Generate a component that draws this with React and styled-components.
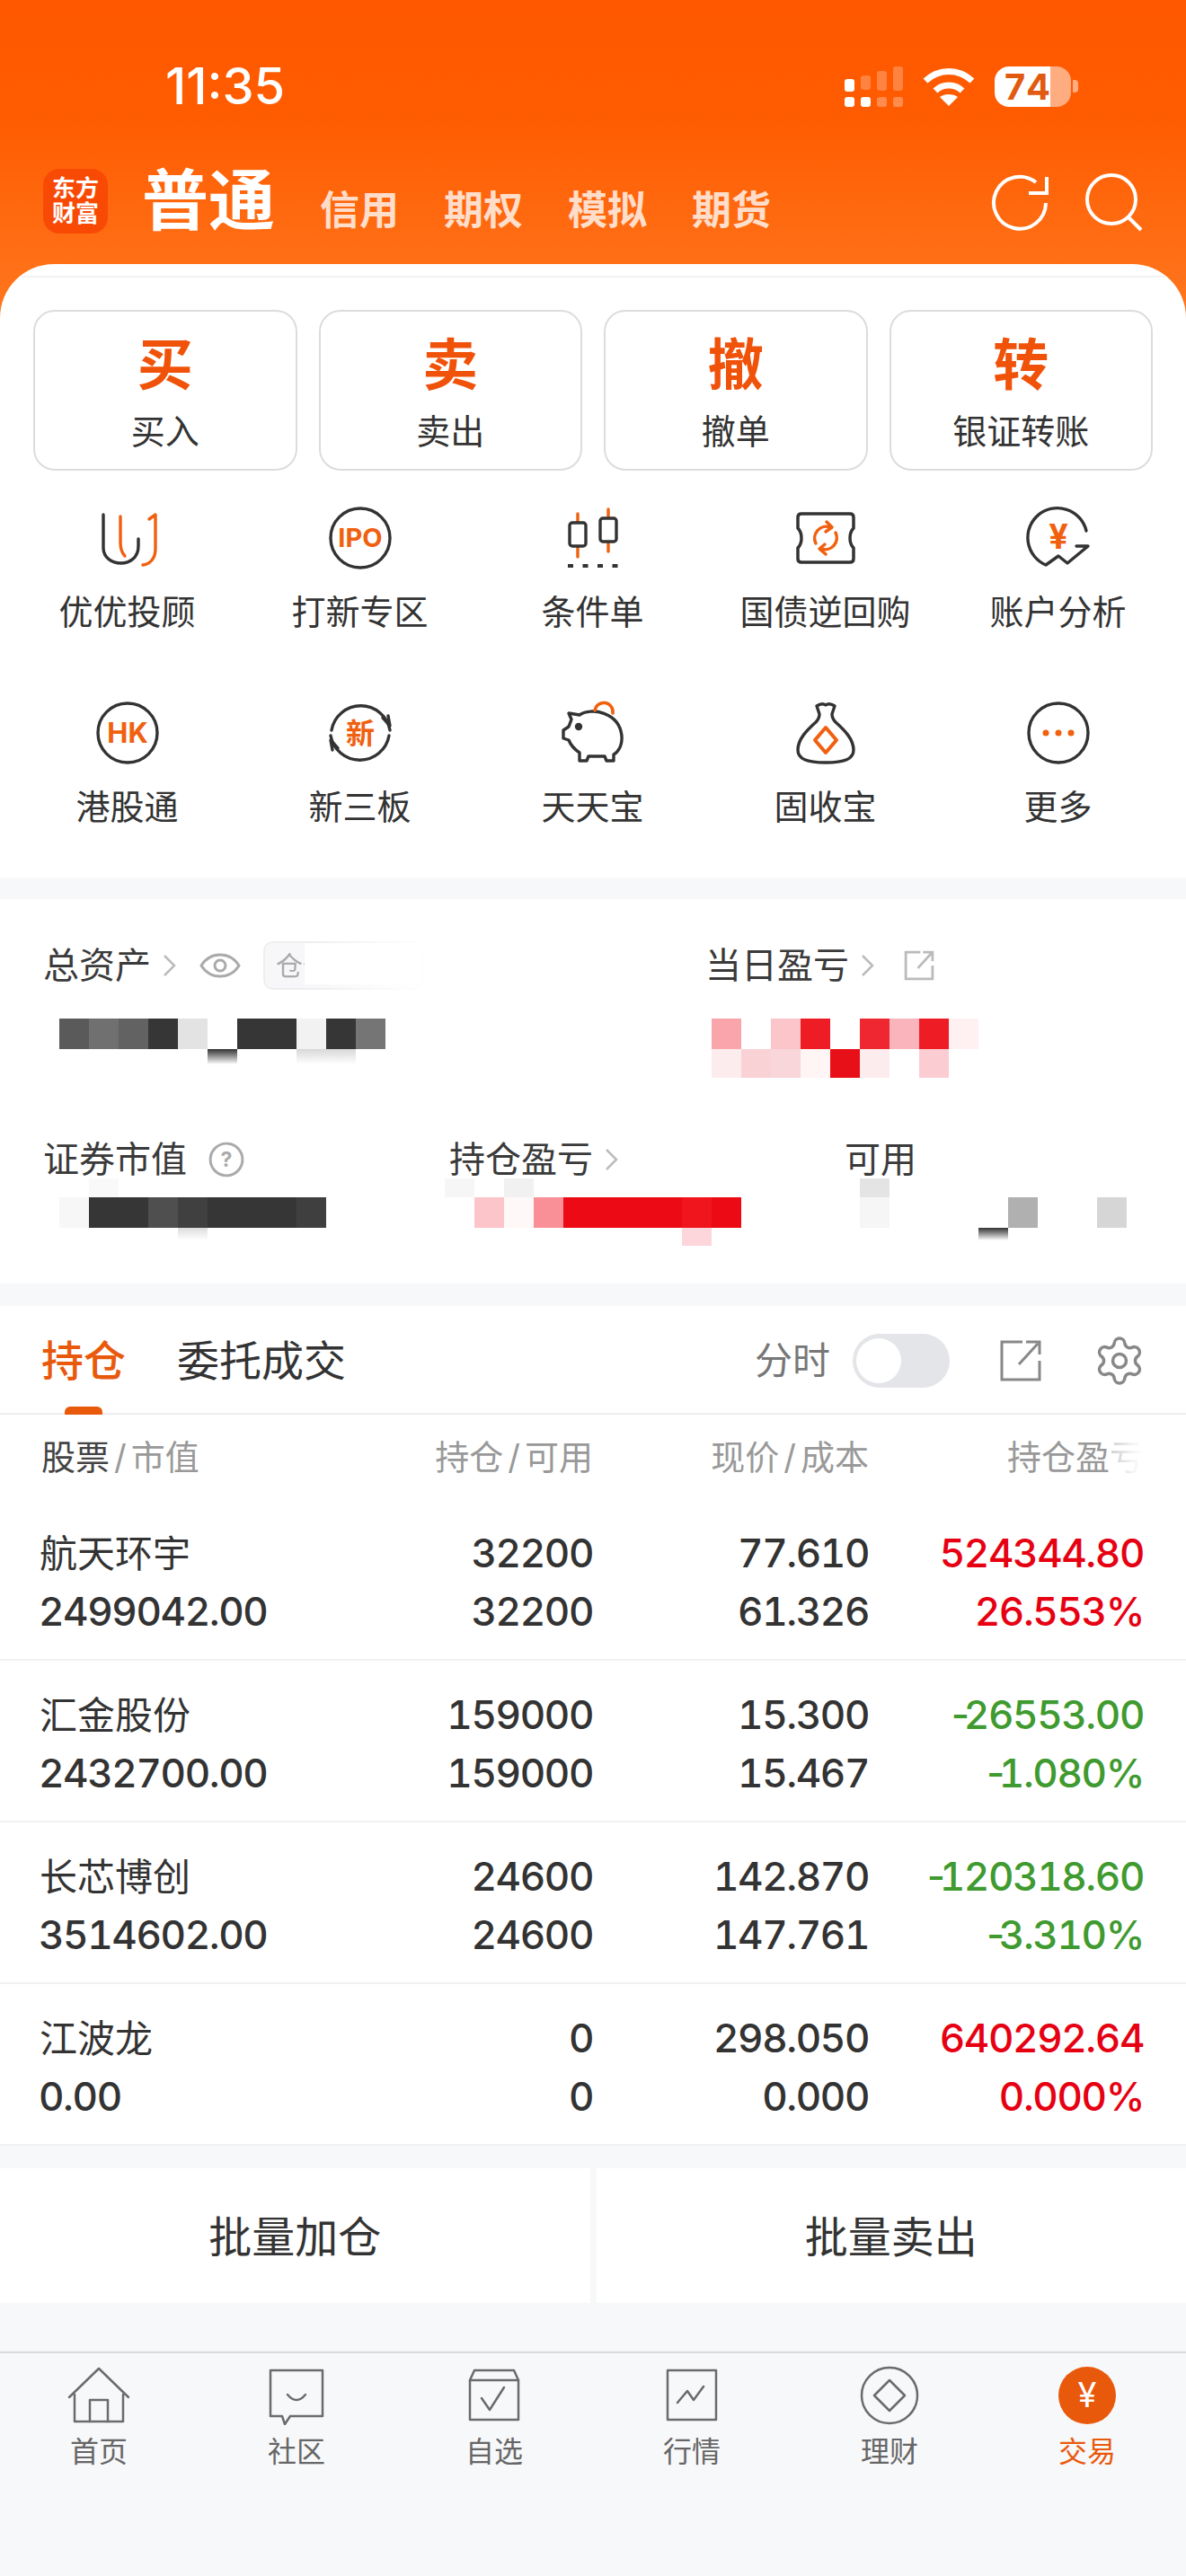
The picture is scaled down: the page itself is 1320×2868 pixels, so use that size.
import React from "react";
import styled, { createGlobalStyle } from "styled-components";
import { Settings } from "lucide-react";

const ORANGE = "#e9590c";
const INK = "#333";
const UP = "#e60012";
const DOWN = "#3f9a2f";

const GlobalStyle = createGlobalStyle`
  html, body { margin: 0; padding: 0; background: #f7f8fa; }
  * { box-sizing: border-box; }
  body { font-family: Inter, "Noto Sans CJK SC", sans-serif; color: ${INK}; }
`;

const Page = styled.div`
  width: 1320px;
  height: 2868px;
  display: flex;
  flex-direction: column;
  overflow: hidden;
  background: #f7f8fa;
`;

const TopArea = styled.div`
  background: linear-gradient(#ff5800 0, #ff5b00 120px, #ff771f 360px) no-repeat;
  background-size: 100% 370px;
`;

const StatusBar = styled.div`
  display: flex;
  align-items: center;
  justify-content: space-between;
  height: 45px;
  margin-top: 74px;
  padding: 0 128px 0 184px;
  color: #fff;
`;

const Clock = styled.div`
  font-size: 56px;
  font-weight: 500;
  line-height: 45px;
`;

const StatusIcons = styled.div`
  display: flex;
  align-items: center;
  gap: 22px;
`;

const Battery = styled.div`
  position: relative;
  width: 85px;
  height: 45px;
  border-radius: 16px;
  background: linear-gradient(90deg, #fff 73%, rgba(255, 255, 255, 0.5) 73%);
  color: #e25a10;
  font-size: 40px;
  font-weight: 700;
  line-height: 45px;
  padding-left: 11px;
  letter-spacing: 3px;

  &::after {
    content: "";
    position: absolute;
    right: -8px;
    top: 15px;
    width: 6px;
    height: 14px;
    border-radius: 0 4px 4px 0;
    background: rgba(255, 255, 255, 0.5);
  }
`;

const Nav = styled.div`
  display: flex;
  align-items: flex-end;
  height: 72px;
  margin-top: 69px;
  padding: 0 47px 0 48px;
`;

const Logo = styled.div`
  width: 72px;
  height: 72px;
  border-radius: 18px;
  background: #f94a05;
  color: #fff;
  font-size: 26px;
  font-weight: 700;
  line-height: 28px;
  text-align: center;
  padding-top: 8px;
`;

const MainTab = styled.div`
  margin-left: 38px;
  color: #fff;
  font-size: 74px;
  font-weight: 700;
  line-height: 74px;
`;

const NavTabs = styled.div`
  display: flex;
  gap: 50px;
  margin-left: 50px;
`;

const NavTab = styled.div`
  color: rgba(255, 255, 255, 0.8);
  font-size: 44px;
  font-weight: 700;
  line-height: 52px;
`;

const NavActions = styled.div`
  display: flex;
  gap: 36px;
  margin-left: auto;
  color: #fff;
`;

const Sheet = styled.div`
  margin-top: 34px;
  padding: 13px 0 57px;
  border-radius: 60px 60px 0 0;
  background: #fff;
`;

const SheetRule = styled.div`
  height: 2px;
  margin: 0 24px;
  background: #f2f2f2;
`;

const TradeRow = styled.div`
  display: grid;
  grid-template-columns: repeat(4, 1fr);
  gap: 24px;
  margin-top: 36px;
  padding: 0 37px;
`;

const TradeButton = styled.div`
  height: 179px;
  border: 2px solid #dcdcdc;
  border-radius: 24px;
  text-align: center;
  padding-top: 22px;
`;

const TradeGlyph = styled.div`
  color: #f0520a;
  font-size: 62px;
  font-weight: 700;
  line-height: 76px;
`;

const TradeLabel = styled.div`
  font-size: 38px;
  line-height: 46px;
  margin-top: 12px;
`;

const ServiceGrid = styled.div`
  display: grid;
  grid-template-columns: repeat(5, 259px);
  row-gap: 78px;
  margin-top: 40px;
  padding: 0 12px;
`;

const Service = styled.div`
  display: flex;
  flex-direction: column;
  align-items: center;
  gap: 25px;
`;

const ServiceLabel = styled.div`
  font-size: 38px;
  line-height: 44px;
`;

const Assets = styled.div`
  height: 428px;
  margin-top: 24px;
  padding-top: 52px;
  background: #fff;
`;

const MetricRow = styled.div`
  display: flex;
  height: 216px;
  padding-left: 48px;
`;

const Metric = styled.div`
  width: ${(p) => p.$w}px;
`;

const MetricHead = styled.div`
  display: flex;
  align-items: center;
  height: 44px;
  font-size: 40px;
  line-height: 44px;
  color: #3a3a3a;
`;

const Chip = styled.div`
  position: relative;
  width: 178px;
  height: 54px;
  margin-left: 25px;
  padding-left: 12px;
  overflow: hidden;
  border: 2px solid #eee;
  border-radius: 10px;
  background: #f7f7f9;
  color: #aaa;
  font-size: 30px;
  line-height: 50px;
  -webkit-mask-image: linear-gradient(90deg, #000 30%, rgba(0, 0, 0, 0.25) 80%, rgba(0, 0, 0, 0.1) 100%);
  mask-image: linear-gradient(90deg, #000 30%, rgba(0, 0, 0, 0.25) 80%, rgba(0, 0, 0, 0.1) 100%);

  &::after {
    content: "";
    position: absolute;
    top: -2px;
    right: -2px;
    bottom: 4px;
    width: 132px;
    background: #fff;
  }
`;

const MosaicBox = styled.div`
  margin: ${(p) => p.$top}px 0 0 ${(p) => p.$left}px;
`;

const MosaicRow = styled.div`
  display: flex;
  height: ${(p) => p.$h}px;
`;

const MosaicCell = styled.div`
  width: 33px;
  height: 100%;
  background: ${(p) =>
    p.$fade ? `linear-gradient(${p.$c}, rgba(255, 255, 255, 0))` : p.$c};
`;

const ChevronWrap = styled.svg`
  margin-left: 8px;
`;

const Holdings = styled.div`
  margin-top: 25px;
  background: #fff;
`;

const HoldingTabs = styled.div`
  position: relative;
  display: flex;
  align-items: center;
  height: 121px;
  padding: 2px 44px 0 46px;
  border-bottom: 2px solid #eee;
`;

const HoldingTab = styled.div`
  margin-right: 57px;
  color: ${(p) => (p.$active ? ORANGE : INK)};
  font-size: 47px;
  font-weight: ${(p) => (p.$active ? 500 : 400)};
  line-height: 56px;
`;

const TabMark = styled.div`
  position: absolute;
  left: 72px;
  bottom: -2px;
  width: 42px;
  height: 9px;
  border-radius: 6px 6px 0 0;
  background: ${ORANGE};
`;

const TabTools = styled.div`
  display: flex;
  align-items: center;
  margin-left: auto;
  color: #888;
`;

const ToolLabel = styled.div`
  font-size: 42px;
  line-height: 50px;
  color: #777;
`;

const Toggle = styled.div`
  position: relative;
  width: 108px;
  height: 60px;
  margin: 0 55px 0 25px;
  border-radius: 30px;
  background: #e4e5e8;

  &::after {
    content: "";
    position: absolute;
    left: 4px;
    top: 5px;
    width: 50px;
    height: 50px;
    border-radius: 50%;
    background: #fff;
  }
`;

const GearIcon = styled(Settings)`
  margin-left: 56px;
`;

const TableGrid = styled.div`
  display: grid;
  grid-template-columns: 303px 311px 307px 306px;
  padding-left: 46px;
`;

const TableHead = styled(TableGrid)`
  height: 94px;
  padding-top: 24px;
  font-size: 38px;
  line-height: 46px;
  color: #999;
`;

const HeadCell = styled.div`
  text-align: ${(p) => (p.$left ? "left" : "right")};
`;

const HeadStrong = styled.span`
  color: #444;
`;

const FadedEnd = styled.span`
  display: inline-block;
  -webkit-mask-image: linear-gradient(90deg, rgba(0, 0, 0, 0.5) 0%, rgba(0, 0, 0, 0.1) 70%, transparent 100%);
  mask-image: linear-gradient(90deg, rgba(0, 0, 0, 0.5) 0%, rgba(0, 0, 0, 0.1) 70%, transparent 100%);
`;

const Slash = styled.span`
  margin: 0 5px;
`;

const HoldingRow = styled(TableGrid)`
  height: 180px;
  padding-top: 28px;
  border-bottom: 2px solid #f1f1f1;
`;

const Cell = styled.div`
  text-align: ${(p) => (p.$left ? "left" : "right")};
  color: ${(p) => p.$color || INK};
  font-size: 44px;
  font-weight: 500;
  font-variant-numeric: tabular-nums;
  letter-spacing: -1.4px;
  line-height: 65px;
`;

const StockName = styled.div`
  margin-left: -2px;
  font-size: 42px;
  font-weight: 400;
  letter-spacing: 0;
`;

const StockValue = styled.div`
  margin-left: -3px;
`;

/* the minus sign stays proportional next to the tabular digits */
const Minus = styled.span`
  font-variant-numeric: normal;
  margin-right: -5px;
`;

const BatchRow = styled.div`
  display: flex;
  gap: 7px;
  margin-top: 25px;
`;

const BatchButton = styled.div`
  flex: 1;
  height: 150px;
  background: #fff;
  font-size: 48px;
  line-height: 154px;
  text-align: center;
`;

const TabBar = styled.div`
  display: grid;
  grid-template-columns: repeat(6, 220px);
  flex: 1;
  align-content: start;
  margin-top: 54px;
  padding-top: 14px;
  border-top: 2px solid #d8d9dd;
`;

const TabItem = styled.div`
  display: flex;
  flex-direction: column;
  align-items: center;
  color: ${(p) => (p.$active ? ORANGE : "#666")};
`;

const TabLabel = styled.div`
  margin-top: 10px;
  font-size: 32px;
  line-height: 40px;
`;

const IconText = styled.text`
  font-family: Inter, "Noto Sans CJK SC", sans-serif;
  font-weight: ${(p) => p.$weight || 700};
  text-anchor: middle;
`;

/* line icons of the service grid: dark outline with an orange accent */
const GridIcon = ({ children }) => (
  <svg
    width="70"
    height="70"
    viewBox="0 0 70 70"
    fill="none"
    stroke="#333"
    strokeWidth="3.4"
    strokeLinecap="round"
    strokeLinejoin="round"
    overflow="visible"
  >
    {children}
  </svg>
);

const Accent = ({ children }) => (
  <g stroke="#f0600f" fill="none">
    {children}
  </g>
);

const serviceItems = [
  {
    label: "优优投顾",
    icon: (
      <GridIcon>
        <path d="M8 9V46C8 68 47 70 47 44V36" />
        <Accent>
          <path d="M27 11V40C27 47 29 52 32 55" />
          <path d="M59 14L66 9V47C66 58 60 64 52 65" />
        </Accent>
      </GridIcon>
    ),
  },
  {
    label: "打新专区",
    icon: (
      <GridIcon>
        <circle cx="35" cy="35" r="33" />
        <IconText x="35" y="45" fontSize="29" fill="#f0600f" stroke="none">
          IPO
        </IconText>
      </GridIcon>
    ),
  },
  {
    label: "条件单",
    icon: (
      <GridIcon>
        <Accent>
          <path d="M18 8V56M52 3V50" />
        </Accent>
        <rect x="9" y="18" width="18" height="26" rx="3" fill="#fff" />
        <rect x="43" y="13" width="18" height="26" rx="3" fill="#fff" />
        <path d="M7 66H66" strokeWidth="4" strokeDasharray="6 10.5" strokeLinecap="butt" />
      </GridIcon>
    ),
  },
  {
    label: "国债逆回购",
    icon: (
      <GridIcon>
        <path
          d="M8 8H62Q66 8 66 12V24Q62 28 62 35Q62 42 66 46V58Q66 62 62 62H8Q4 62 4 58V46Q8 42 8 35Q8 28 4 24V12Q4 8 8 8Z"
          strokeWidth="3.5"
        />
        <Accent>
          <path d="M24 41A13 13 0 0 1 40 23M46 29A13 13 0 0 1 30 47" strokeWidth="3.5" />
          <path d="M36 17L42 23L35 28M34 42L28 47L35 53" strokeWidth="3.5" />
        </Accent>
      </GridIcon>
    ),
  },
  {
    label: "账户分析",
    icon: (
      <GridIcon>
        <path d="M66 27A33 33 0 1 0 21 65L35 55L45 63L68 44H55" />
        <IconText x="35" y="47" fontSize="38" fill="#f0600f" stroke="none">
          ¥
        </IconText>
      </GridIcon>
    ),
  },
  {
    label: "港股通",
    icon: (
      <GridIcon>
        <circle cx="35" cy="35" r="33" />
        <IconText x="35" y="46" fontSize="31" fill="#f0600f" stroke="none">
          HK
        </IconText>
      </GridIcon>
    ),
  },
  {
    label: "新三板",
    icon: (
      <GridIcon>
        <path d="M2 38A33 33 0 0 0 67 38M68 32A33 33 0 0 0 3 32" />
        <path d="M60 18L68 27L66 16M10 52L2 43L4 54" />
        <IconText x="35" y="47" fontSize="32" fill="#f0600f" stroke="none">
          新
        </IconText>
      </GridIcon>
    ),
  },
  {
    label: "天天宝",
    icon: (
      <GridIcon>
        <path d="M8 13L20 15C33 6 64 12 67 38C68 50 62 57 58 59V66H50L48 61H30L28 66H20V57C14 53 10 48 8 43L2 41V32L8 28L11 20Z" />
        <circle cx="19" cy="28" r="2.5" fill="#333" />
        <Accent>
          <path d="M37 10A10 10 0 0 1 57 13" strokeWidth="3.5" />
        </Accent>
      </GridIcon>
    ),
  },
  {
    label: "固收宝",
    icon: (
      <GridIcon>
        <path d="M25 5Q31 1 35 4Q39 1 45 5L42 14Q42 19 46 23C56 32 66 42 66 54C66 64 56 68 35 68C14 68 4 64 4 54C4 42 14 32 24 23Q28 19 28 14Z" />
        <Accent>
          <path d="M35 29L47 43L35 57L23 43Z" strokeWidth="4" />
        </Accent>
      </GridIcon>
    ),
  },
  {
    label: "更多",
    icon: (
      <GridIcon>
        <circle cx="35" cy="35" r="33" />
        <g fill="#f0600f" stroke="none">
          <circle cx="21" cy="35" r="3.5" />
          <circle cx="35" cy="35" r="3.5" />
          <circle cx="49" cy="35" r="3.5" />
        </g>
      </GridIcon>
    ),
  },
];

const Chevron = () => (
  <ChevronWrap width="26" height="30" viewBox="0 0 26 30" fill="none" stroke="#bbb" strokeWidth="2.5">
    <path d="M7 4L18 15L7 26" />
  </ChevronWrap>
);

const ExternalIcon = ({ size, color, width = 3 }) => (
  <svg width={size} height={size} viewBox="0 0 48 48" fill="none" stroke={color} strokeWidth={width}>
    <path d="M26 3H3V45H45V24" />
    <path d="M22 28L43 5M30 3H45V17" />
  </svg>
);

const EyeIcon = styled.svg`
  margin-left: 20px;
`;

const OutIcon = styled.span`
  display: flex;
  margin-left: 27px;
`;

const HelpIcon = styled.svg`
  margin-left: 24px;
`;

const mosaicA = [
  { h: 34, cells: ["#5a5a5a", "#707070", "#626262", "#363636", "#e3e3e3", "#fff", "#363636", "#363636", "#f2f2f2", "#363636", "#757575"] },
  { h: 17, fade: true, cells: ["#fff", "#fff", "#fff", "#fff", "#fff", "#333", "#fff", "#fff", "#d8d8d8", "#d8d8d8"] },
];

const mosaicB = [
  { h: 34, cells: ["#f9a5ab", "#fff", "#fbc5c9", "#ee1c25", "#fff", "#ee2730", "#f9b5bb", "#ee1c25", "#fff0f1"] },
  { h: 32, cells: ["#fdecee", "#f9d2d5", "#f9d6d9", "#fff5f5", "#e81018", "#fdeced", "#fff", "#fbcdd2"] },
];

const mosaicC = [
  { h: 21, cells: ["#fff", "#f9f9f9"] },
  { h: 34, cells: ["#f7f7f7", "#363636", "#363636", "#4f4f4f", "#404040", "#363636", "#363636", "#363636", "#3f3f3f"] },
  { h: 14, fade: true, cells: ["#fff", "#fff", "#fff", "#fff", "#ddd"] },
];

const mosaicD = [
  { h: 21, cells: ["#f6f6f6", "#fff", "#f1f1f1"] },
  { h: 34, cells: ["#fff", "#fbc5c9", "#fff8f8", "#f99097", "#ec0a14", "#ec0a14", "#ec0a14", "#ec0a14", "#f0141c", "#ec0a14"] },
  { h: 20, cells: ["#fff", "#fff", "#fff", "#fff", "#fff", "#fff", "#fff", "#fff", "#fcd6da"] },
];

const mosaicE = [
  { h: 21, cells: ["#e4e4e4"] },
  { h: 34, cells: ["#f6f6f6", "#fff", "#fff", "#fff", "#fff", "#b0b0b0", "#fff", "#fff", "#d6d6d6"] },
  { h: 14, fade: true, cells: ["#fff", "#fff", "#fff", "#fff", "#333"] },
];

const Mosaic = ({ rows, top, left }) => (
  <MosaicBox $top={top} $left={left}>
    {rows.map((row, r) => (
      <MosaicRow key={r} $h={row.h}>
        {row.cells.map((c, i) => (
          <MosaicCell key={i} $c={c} $fade={row.fade} />
        ))}
      </MosaicRow>
    ))}
  </MosaicBox>
);

const Signed = ({ value }) =>
  value.startsWith("-") ? (
    <>
      <Minus>-</Minus>
      {value.slice(1)}
    </>
  ) : (
    value
  );

const holdings = [
  { name: "航天环宇", value: "2499042.00", qty: "32200", avail: "32200", price: "77.610", cost: "61.326", pl: "524344.80", pct: "26.553%", color: UP },
  { name: "汇金股份", value: "2432700.00", qty: "159000", avail: "159000", price: "15.300", cost: "15.467", pl: "-26553.00", pct: "-1.080%", color: DOWN },
  { name: "长芯博创", value: "3514602.00", qty: "24600", avail: "24600", price: "142.870", cost: "147.761", pl: "-120318.60", pct: "-3.310%", color: DOWN },
  { name: "江波龙", value: "0.00", qty: "0", avail: "0", price: "298.050", cost: "0.000", pl: "640292.64", pct: "0.000%", color: UP },
];

const TabGlyph = ({ children }) => (
  <svg width="70" height="66" viewBox="0 0 70 66" fill="none" stroke="#6b6b6b" strokeWidth="2.5" strokeLinejoin="round" strokeLinecap="round">
    {children}
  </svg>
);

const bottomTabs = [
  {
    label: "首页",
    icon: (
      <TabGlyph>
        <path d="M2 35L35 3L68 35M8 32V62H62V32" />
        <path d="M25 62V38H45V62" />
      </TabGlyph>
    ),
  },
  {
    label: "社区",
    icon: (
      <TabGlyph>
        <path d="M6 5H64V56H28L22 65L19 56H6Z" />
        <path d="M25 32Q35 44 45 32" />
      </TabGlyph>
    ),
  },
  {
    label: "自选",
    icon: (
      <TabGlyph>
        <path d="M8 16L13 5H57L62 16V60H8Z" />
        <path d="M8 16H62" />
        <path d="M21 36L30 49L46 24" />
      </TabGlyph>
    ),
  },
  {
    label: "行情",
    icon: (
      <TabGlyph>
        <path d="M8 5H62V60H8Z" />
        <path d="M19 41L30 28L37 38L48 23" />
      </TabGlyph>
    ),
  },
  {
    label: "理财",
    icon: (
      <TabGlyph>
        <circle cx="35" cy="33" r="31" />
        <path d="M35 16L52 33L35 50L18 33Z" />
      </TabGlyph>
    ),
  },
  {
    label: "交易",
    active: true,
    icon: (
      <TabGlyph>
        <circle cx="35" cy="33" r="32" fill={ORANGE} stroke="none" />
        <IconText x="35" y="46" fontSize="38" fill="#fff" stroke="none" $weight={400}>
          ¥
        </IconText>
      </TabGlyph>
    ),
  },
];

export default function App() {
  return (
    <Page>
      <GlobalStyle />
      <TopArea>
        <StatusBar>
          <Clock>11:35</Clock>
          <StatusIcons>
            <svg width="65" height="45" viewBox="0 0 65 45" fill="#fff">
              <rect x="0" y="14" width="11" height="14" rx="3" />
              <rect x="18" y="10" width="11" height="16" rx="3" opacity="0.25" />
              <rect x="36" y="5" width="11" height="22" rx="3" opacity="0.25" />
              <rect x="54" y="0" width="11" height="27" rx="3" opacity="0.25" />
              <rect x="0" y="34" width="11" height="11" rx="3" />
              <rect x="18" y="34" width="11" height="11" rx="3" />
              <rect x="36" y="34" width="11" height="11" rx="3" opacity="0.3" />
              <rect x="54" y="34" width="11" height="11" rx="3" opacity="0.3" />
            </svg>
            <svg width="58" height="45" viewBox="0 0 58 45" fill="none" stroke="#fff" strokeWidth="7">
              <path d="M3 16C18 2 40 2 55 16M14 27C22 19 36 19 44 27" />
              <path d="M19 34C24 30 34 30 39 34L29 44Z" fill="#fff" stroke="none" />
            </svg>
            <Battery>74</Battery>
          </StatusIcons>
        </StatusBar>

        <Nav>
          <Logo>
            东方
            <br />
            财富
          </Logo>
          <MainTab>普通</MainTab>
          <NavTabs>
            {["信用", "期权", "模拟", "期货"].map((t) => (
              <NavTab key={t}>{t}</NavTab>
            ))}
          </NavTabs>
          <NavActions>
            <svg width="68" height="72" viewBox="0 0 68 72" fill="none" stroke="currentColor" strokeWidth="4">
              <path d="M63 38A29 29 0 1 1 52 15" />
              <path d="M44 27H64V9" />
            </svg>
            <svg width="68" height="72" viewBox="0 0 68 72" fill="none" stroke="currentColor" strokeWidth="4">
              <circle cx="32" cy="34" r="27" />
              <path d="M51 54L65 68" />
            </svg>
          </NavActions>
        </Nav>

        <Sheet>
          <SheetRule />
          <TradeRow>
            {[
              ["买", "买入"],
              ["卖", "卖出"],
              ["撤", "撤单"],
              ["转", "银证转账"],
            ].map(([glyph, label]) => (
              <TradeButton key={glyph}>
                <TradeGlyph>{glyph}</TradeGlyph>
                <TradeLabel>{label}</TradeLabel>
              </TradeButton>
            ))}
          </TradeRow>
          <ServiceGrid>
            {serviceItems.map((item) => (
              <Service key={item.label}>
                {item.icon}
                <ServiceLabel>{item.label}</ServiceLabel>
              </Service>
            ))}
          </ServiceGrid>
        </Sheet>
      </TopArea>

      <Assets>
        <MetricRow>
          <Metric $w={737}>
            <MetricHead>
              总资产
              <Chevron />
              <EyeIcon width="46" height="30" viewBox="0 0 46 30" fill="none" stroke="#aaa" strokeWidth="3">
                <path d="M2 15C12 -1 34 -1 44 15C34 31 12 31 2 15Z" />
                <circle cx="23" cy="15" r="6" />
              </EyeIcon>
              <Chip>仓位</Chip>
            </MetricHead>
            <Mosaic rows={mosaicA} top={37} left={18} />
          </Metric>
          <Metric $w={480}>
            <MetricHead>
              当日盈亏
              <Chevron />
              <OutIcon>
                <ExternalIcon size={34} color="#bbb" width={4} />
              </OutIcon>
            </MetricHead>
            <Mosaic rows={mosaicB} top={37} left={7} />
          </Metric>
        </MetricRow>
        <MetricRow>
          <Metric $w={452}>
            <MetricHead>
              证券市值
              <HelpIcon width="40" height="40" viewBox="0 0 38 38" fill="none" stroke="#aaa" strokeWidth="2.8">
                <circle cx="19" cy="19" r="17" />
                <IconText x="19" y="27" fontSize="22" fill="#aaa" stroke="none">
                  ?
                </IconText>
              </HelpIcon>
            </MetricHead>
            <Mosaic rows={mosaicC} top={-1} left={18} />
          </Metric>
          <Metric $w={440}>
            <MetricHead>
              持仓盈亏
              <Chevron />
            </MetricHead>
            <Mosaic rows={mosaicD} top={-1} left={-5} />
          </Metric>
          <Metric $w={360}>
            <MetricHead>可用</MetricHead>
            <Mosaic rows={mosaicE} top={-1} left={17} />
          </Metric>
        </MetricRow>
      </Assets>

      <Holdings>
        <HoldingTabs>
          <HoldingTab $active>持仓</HoldingTab>
          <HoldingTab>委托成交</HoldingTab>
          <TabMark />
          <TabTools>
            <ToolLabel>分时</ToolLabel>
            <Toggle />
            <ExternalIcon size={48} color="#888" />
            <GearIcon size={60} strokeWidth={1.4} />
          </TabTools>
        </HoldingTabs>

        <TableHead>
          <HeadCell $left>
            <HeadStrong>股票</HeadStrong>
            <Slash>/</Slash>市值
          </HeadCell>
          <HeadCell>
            持仓<Slash>/</Slash>可用
          </HeadCell>
          <HeadCell>
            现价<Slash>/</Slash>成本
          </HeadCell>
          <HeadCell>
            持仓盈<FadedEnd>亏</FadedEnd>
          </HeadCell>
        </TableHead>

        {holdings.map((h) => (
          <HoldingRow key={h.name}>
            <Cell $left>
              <StockName>{h.name}</StockName>
              <StockValue>{h.value}</StockValue>
            </Cell>
            <Cell>
              {h.qty}
              <br />
              {h.avail}
            </Cell>
            <Cell>
              {h.price}
              <br />
              {h.cost}
            </Cell>
            <Cell $color={h.color}>
              <Signed value={h.pl} />
              <br />
              <Signed value={h.pct} />
            </Cell>
          </HoldingRow>
        ))}
      </Holdings>

      <BatchRow>
        <BatchButton>批量加仓</BatchButton>
        <BatchButton>批量卖出</BatchButton>
      </BatchRow>

      <TabBar>
        {bottomTabs.map((tab) => (
          <TabItem key={tab.label} $active={tab.active}>
            {tab.icon}
            <TabLabel>{tab.label}</TabLabel>
          </TabItem>
        ))}
      </TabBar>
    </Page>
  );
}
